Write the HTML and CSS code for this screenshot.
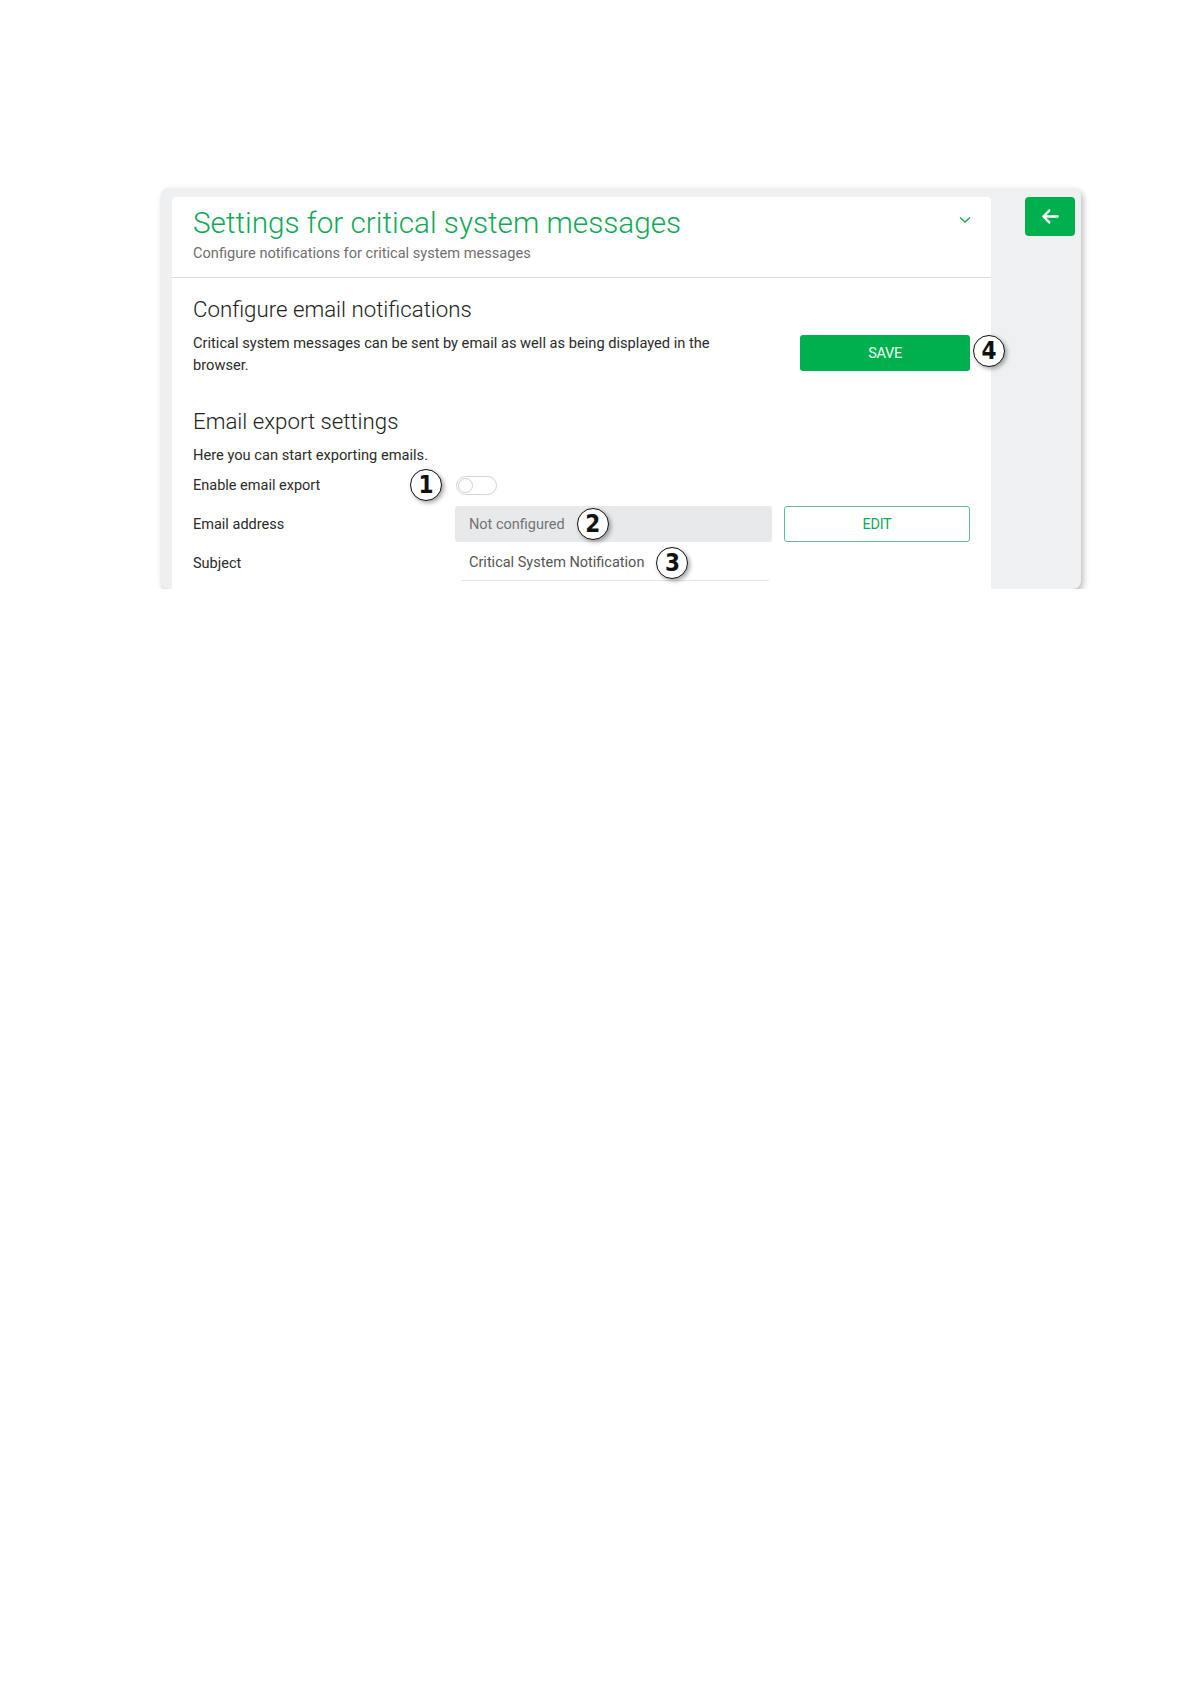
FILE: index.html
```html
<!DOCTYPE html>
<html lang="en">
<head>
    <meta charset="utf-8">
    <title>Settings for critical system messages</title>
    <link rel="stylesheet" href="styles.css">
</head>
<body>
    <div class="page">
        <div class="panel">
            <section class="card">
                <header class="card-head">
                    <div>
                        <h1 class="title">Settings for critical system messages</h1>
                        <p class="subtitle">Configure notifications for critical system messages</p>
                    </div>
                    <svg class="chevron" viewBox="0 0 12 8" width="12" height="8">
                        <path d="M1 1.5 L6 6 L11 1.5" fill="none" stroke="#16a85a" stroke-width="1.4"/>
                    </svg>
                </header>
                <div class="card-body">
                    <h2 class="section-title">Configure email notifications</h2>
                    <div class="notify-row">
                        <p class="text notify-text">Critical system messages can be sent by email as well as being displayed in the browser.</p>
                        <div class="save-wrap">
                            <button class="btn-save" type="button">SAVE</button>
                            <span class="marker marker-save">4</span>
                        </div>
                    </div>

                    <h2 class="section-title export-title">Email export settings</h2>
                    <p class="text">Here you can start exporting emails.</p>

                    <div class="form-grid">
                        <div class="label">Enable email export</div>
                        <div class="field field-toggle">
                            <span class="marker marker-toggle">1</span>
                            <span class="toggle"><span class="knob"></span></span>
                        </div>
                        <div></div>

                        <div class="label">Email address</div>
                        <div class="field input-static">
                            <span class="muted">Not configured</span>
                            <span class="marker">2</span>
                        </div>
                        <button class="btn-edit" type="button">EDIT</button>

                        <div class="label">Subject</div>
                        <div class="field input-line">
                            <span class="value">Critical System Notification</span>
                            <span class="marker">3</span>
                        </div>
                        <div></div>
                    </div>
                </div>
            </section>
            <aside class="side">
                <button class="btn-back" type="button" aria-label="Back">
                    <svg viewBox="0 0 448 512" width="17" height="19">
                        <path fill="#fff" d="M9.4 233.4c-12.5 12.5-12.5 32.8 0 45.3l160 160c12.5 12.5 32.8 12.5 45.3 0s12.5-32.8 0-45.3L109.2 288 416 288c17.7 0 32-14.3 32-32s-14.3-32-32-32l-306.7 0L214.6 118.6c12.5-12.5 12.5-32.8 0-45.3s-32.8-12.5-45.3 0l-160 160z"/>
                    </svg>
                </button>
            </aside>
        </div>
    </div>
</body>
</html>
```

FILE: styles.css
```css
body {margin:0; background:#fff; font-family:Roboto, "Liberation Sans", sans-serif; color:#2b2b2b;}

.page {padding:188px 0 0 161px;}

.panel {display:flex; width:920px; background:#eff0f2; border-radius:8px; box-shadow:2px 3px 6px rgba(0,0,0,.28); padding:9px 0 0 11px; box-sizing:border-box;}

.card {width:819px; background:#fff; border-radius:4px 4px 0 0;}

.card-head {display:flex; justify-content:space-between; align-items:flex-start; padding:8px 21px 14px 21px; border-bottom:1px solid #dcdcdc;}
.title {margin:0; font-size:29.7px; line-height:36px; font-weight:300; color:#13a857;}
.subtitle {margin:2px 0 0; font-size:14.6px; line-height:20px; color:#6f6f6f; font-weight:400;}
.chevron {margin-top:11px; margin-right:-1px;}

.card-body {padding:17px 21px 8px 21px;}
.section-title {margin:0 0 9px; font-size:22.25px; line-height:28px; font-weight:300; color:#222;}
.export-title {margin-top:31px;}
.text {margin:0; font-size:14.65px; line-height:22px;}

.notify-row {display:flex; align-items:center; justify-content:space-between;}
.notify-text {width:540px;}
.save-wrap {position:relative; margin-top:-2px;}
.btn-save {display:block; width:170px; height:36px; border:none; border-radius:3px; background:#00b04f; color:#eafff0; font-family:inherit; font-size:14.5px; letter-spacing:-.3px;}

.form-grid {display:grid; grid-template-columns:250px 317px 186px; column-gap:12px; grid-template-rows:36px 36px 36px; row-gap:3px; margin-top:1px; align-items:center;}
.label {font-size:14.5px;}
.field {position:relative; display:flex; align-items:center; height:100%; box-sizing:border-box;}

.toggle {display:block; width:41px; height:19px; border:1px solid #d5d5d5; border-radius:10px; box-sizing:border-box; margin-left:1px; position:relative;}
.knob {position:absolute; left:1px; top:1px; width:15px; height:15px; border:1px solid #cfcfcf; border-radius:50%; box-sizing:border-box; background:#fff;}

.input-static {background:#e8e9eb; border-radius:3px; padding-left:14px;}
.muted {color:#737373; font-size:14.5px;}

.input-line {margin:0 3px 0 7px; padding-left:7px; border-bottom:1px solid #e4e4e4;}
.value {color:#555; font-size:14.5px;}

.btn-edit {height:36px; border:1px solid #63bd92; border-radius:3px; background:#fff; color:#12a856; font-family:inherit; font-size:14.5px; letter-spacing:-.3px;}

.marker {display:inline-flex; align-items:center; justify-content:center; width:32px; height:32px; margin-left:12px; border:1.5px solid #111; border-radius:50%; box-sizing:border-box; background:#fff; color:#111; font-family:"Liberation Sans Narrow", "DejaVu Sans Condensed", "Liberation Sans", sans-serif; font-weight:700; font-size:24px; box-shadow:2px 2px 4px rgba(0,0,0,.35);}
.marker-toggle {position:absolute; left:-45px; top:2px; margin:0;}
.marker-save {position:absolute; left:calc(100% + 3px); top:0; margin:0;}

.side {flex:1; padding-left:34px;}
.btn-back {display:flex; align-items:center; justify-content:center; width:50px; height:39px; border:none; border-radius:4px; background:#00b04f; padding:0;}
```
